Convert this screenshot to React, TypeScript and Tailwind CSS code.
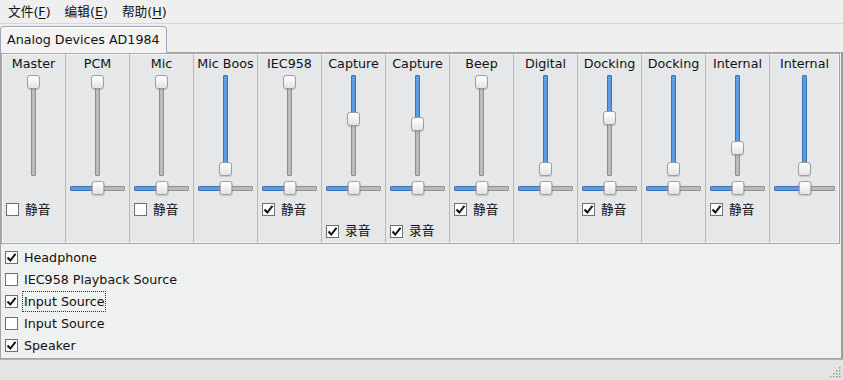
import React from "react";

type Channel = {
  name: string;
  v: number;
  bal: boolean;
  mute?: boolean;
  cap?: boolean;
};

const channels: Channel[] = [
  { name: "Master", v: 0, bal: false, mute: false },
  { name: "PCM", v: 0, bal: true },
  { name: "Mic", v: 0, bal: true, mute: false },
  { name: "Mic Boos", v: 1, bal: true },
  { name: "IEC958", v: 0, bal: true, mute: true },
  { name: "Capture", v: 0.43, bal: true, cap: true },
  { name: "Capture", v: 0.48, bal: true, cap: true },
  { name: "Beep", v: 0, bal: true, mute: true },
  { name: "Digital", v: 1, bal: true },
  { name: "Docking", v: 0.41, bal: true, mute: true },
  { name: "Docking", v: 1, bal: true },
  { name: "Internal", v: 0.76, bal: true, mute: true },
  { name: "Internal", v: 1, bal: true },
];

const switches = [
  { label: "Headphone", on: true },
  { label: "IEC958 Playback Source", on: false },
  { label: "Input Source", on: true, focus: true },
  { label: "Input Source", on: false },
  { label: "Speaker", on: true },
];

function Check({ on }: { on: boolean }) {
  return (
    <span className="w-[13px] h-[13px] bg-white border border-[#6f6f6f] flex items-center justify-center shrink-0">
      {on && (
        <svg width="11" height="11" viewBox="0 0 11 11">
          <path d="M1.5 5.5 L4.3 8.5 L9.5 1.8" fill="none" stroke="#111" strokeWidth="2" />
        </svg>
      )}
    </span>
  );
}

function Handle() {
  return (
    <div className="w-[13px] h-[14px] rounded-[3px] border border-[#9d9d9d] bg-gradient-to-b from-white to-[#e4e4e4] shadow-[0_1px_1px_rgba(0,0,0,0.15)]" />
  );
}

function VSlider({ v }: { v: number }) {
  const top = Math.round(v * 87);
  return (
    <div className="relative w-[13px] h-[101px]">
      <div
        className="absolute left-[4px] top-0 w-[5px] rounded-[1px] bg-[#5b9be3] border border-[#3f72b5]"
        style={{ height: top + 7 }}
      />
      <div
        className="absolute left-[4px] bottom-0 w-[5px] rounded-[1px] bg-[#bcbcbc] border border-[#8e8e8e]"
        style={{ top: top + 7 }}
      />
      <div className="absolute left-0" style={{ top }}>
        <Handle />
      </div>
    </div>
  );
}

function HSlider() {
  return (
    <div className="relative h-[14px] mx-[4px] flex items-center">
      <div className="flex-1 h-[5px] rounded-l-[1px] bg-[#5b9be3] border border-[#3f72b5]" />
      <div className="flex-1 h-[5px] rounded-r-[1px] bg-[#bcbcbc] border border-[#8e8e8e]" />
      <div className="absolute left-1/2 top-0 -translate-x-1/2">
        <Handle />
      </div>
    </div>
  );
}

function Column({ ch, last }: { ch: Channel; last: boolean }) {
  return (
    <div
      className={
        "flex flex-col h-full " +
        (last ? "flex-1" : "w-[64px] border-r border-[#b9b9b9]")
      }
    >
      <div className="h-[20px] text-center leading-[20px] whitespace-nowrap overflow-hidden text-[#111]">
        {ch.name}
      </div>
      <div className="mt-[1px] flex justify-center">
        <VSlider v={ch.v} />
      </div>
      <div className="mt-[5px] h-[14px]">{ch.bal && <HSlider />}</div>
      <div className="h-[26px] flex items-center pl-[4px] gap-[6px] pt-[3px]">
        {ch.mute !== undefined && (
          <>
            <Check on={ch.mute} />
            <span>静音</span>
          </>
        )}
      </div>
      <div className="h-[20px] flex items-center pl-[4px] gap-[6px]">
        {ch.cap && (
          <>
            <Check on={true} />
            <span>录音</span>
          </>
        )}
      </div>
    </div>
  );
}

function MenuItem({ label, k }: { label: string; k: string }) {
  return (
    <span className="whitespace-nowrap">
      {label}(<span className="underline underline-offset-2">{k}</span>)
    </span>
  );
}

export default function App() {
  return (
    <div
      className="w-[843px] h-[380px] bg-[#efefef] flex flex-col text-[12.7px] text-[#111] overflow-hidden"
      style={{ fontFamily: '"DejaVu Sans", "Noto Sans CJK SC", sans-serif' }}
    >
      {/* menu bar */}
      <div className="h-[24px] flex items-center gap-[14px] pl-[8px] border-b border-[#d6d6d6]">
        <MenuItem label="文件" k="F" />
        <MenuItem label="编辑" k="E" />
        <MenuItem label="帮助" k="H" />
      </div>

      {/* tabs */}
      <div className="h-[28px] flex items-end">
        <div className="h-[27px] px-[6px] flex items-center bg-[#f3f3f3] border border-b-0 border-[#98a6b8] rounded-t-[4px] relative top-[1px] shadow-[inset_0_1px_0_#fff]">
          Analog Devices AD1984
        </div>
      </div>

      {/* tab page */}
      <div className="flex-1 flex flex-col border border-[#a4a4a4] border-r-2 border-r-[#9a9a9a] bg-[#eff0f0]">
        <div className="mr-[1px] h-[191px] flex border border-[#a9a9a9] border-r-[#a0a0a0] bg-[#e6e7e8] shadow-[inset_0_0_0_1px_#f5f5f5]">
          {channels.map((ch, i) => (
            <Column key={i} ch={ch} last={i === channels.length - 1} />
          ))}
        </div>

        <div className="flex flex-col pt-[2px] pl-[4px]">
          {switches.map((s, i) => (
            <div key={i} className="h-[22px] flex items-center gap-[5px]">
              <Check on={s.on} />
              <span
                className={
                  "px-[1px] py-[2px] leading-[15px] " +
                  (s.focus ? "outline outline-1 outline-dotted outline-[#333]" : "")
                }
              >
                {s.label}
              </span>
            </div>
          ))}
        </div>
      </div>

      {/* status bar */}
      <div className="h-[21px] bg-[#e4e4e4] border-t border-[#b4b4b4] flex justify-end items-end">
        <svg width="12" height="12" viewBox="0 0 12 12" className="mb-[1px] mr-[1px]">
          <g fill="#9a9a9a">
            <rect x="9" y="0" width="1.5" height="1.5" />
            <rect x="6" y="3" width="1.5" height="1.5" />
            <rect x="9" y="3" width="1.5" height="1.5" />
            <rect x="3" y="6" width="1.5" height="1.5" />
            <rect x="6" y="6" width="1.5" height="1.5" />
            <rect x="9" y="6" width="1.5" height="1.5" />
            <rect x="0" y="9" width="1.5" height="1.5" />
            <rect x="3" y="9" width="1.5" height="1.5" />
            <rect x="6" y="9" width="1.5" height="1.5" />
            <rect x="9" y="9" width="1.5" height="1.5" />
          </g>
        </svg>
      </div>
    </div>
  );
}
